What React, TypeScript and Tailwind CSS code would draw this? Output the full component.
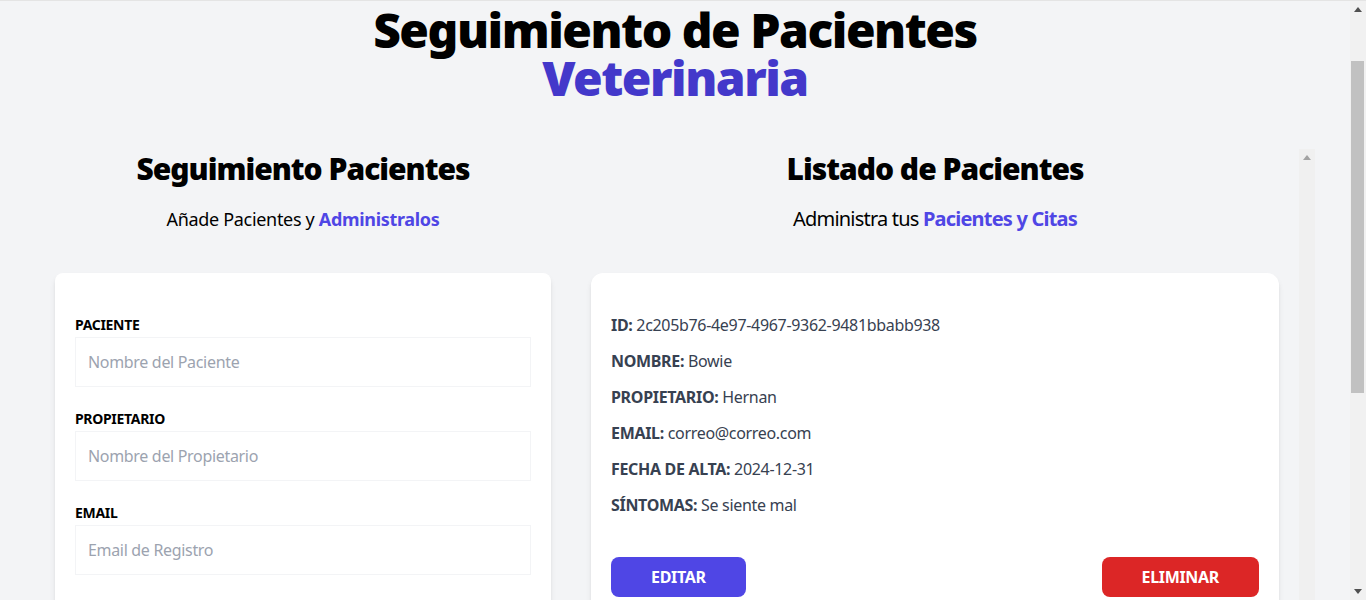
import React from "react";

function UpArrow({ color }: { color: string }) {
  return (
    <svg width="8" height="5" viewBox="0 0 8 5">
      <path d="M0 5 L4 0 L8 5 Z" fill={color} />
    </svg>
  );
}

function DownArrow({ color }: { color: string }) {
  return (
    <svg width="8" height="5" viewBox="0 0 8 5">
      <path d="M0 0 L8 0 L4 5 Z" fill={color} />
    </svg>
  );
}

function Field({ label, placeholder }: { label: string; placeholder: string }) {
  return (
    <div className="mb-5">
      <label className="block text-sm leading-6 font-bold uppercase text-black">{label}</label>
      <input
        className="block w-full p-3 text-base leading-6 border border-[#f3f4f6] bg-white placeholder:text-[#9ca3af] outline-none tracking-[-0.02em]"
        placeholder={placeholder}
      />
    </div>
  );
}

function Row({ label, value }: { label: string; value: string }) {
  return (
    <p className="mb-3 text-base leading-6 font-bold uppercase text-[#374151]">
      {label} <span className="font-normal normal-case">{value}</span>
    </p>
  );
}

export default function App() {
  return (
    <div className="w-[1366px] h-[600px] overflow-hidden flex bg-[#f3f4f6] border-t border-[#e4e4e4] font-['Noto_Sans',sans-serif] text-black tracking-[-0.02em]">
      <div className="w-[1350px] flex-none">
        <div className="w-[1280px] mx-auto pt-[5px]">
          <h1 className="text-5xl leading-none font-black text-center tracking-[-1.5px]">
            <span className="block">Seguimiento de Pacientes</span>
            <span className="block text-[#4338ca]">Veterinaria</span>
          </h1>

          <div className="mt-[47px] flex items-start">
            {/* Left column */}
            <div className="w-[496px] mx-5 flex-none">
              <h2 className="mt-[2px] text-3xl leading-9 font-black text-center tracking-[-1px]">Seguimiento Pacientes</h2>
              <p className="text-lg leading-7 mt-[18px] mb-10 text-center">
                Añade Pacientes y <span className="text-[#4f46e5] font-bold">Administralos</span>
              </p>
              <form className="bg-white shadow-md rounded-lg py-10 px-5 mb-10">
                <Field label="Paciente" placeholder="Nombre del Paciente" />
                <Field label="Propietario" placeholder="Nombre del Propietario" />
                <Field label="Email" placeholder="Email de Registro" />
                <Field label="Alta" placeholder="" />
              </form>
            </div>

            {/* Right column */}
            <div className="w-[744px] flex-none flex h-[700px]">
              <div className="w-[728px] flex-none">
                <h2 className="mt-[2px] text-3xl leading-9 font-black text-center tracking-[-1px]">Listado de Pacientes</h2>
                <p className="text-xl leading-7 mt-[18px] mb-10 text-center tracking-[-0.04em]">
                  Administra tus <span className="text-[#4f46e5] font-bold">Pacientes y Citas</span>
                </p>
                <div className="mx-5 bg-white shadow-md px-5 py-10 rounded-xl">
                  <Row label="ID:" value="2c205b76-4e97-4967-9362-9481bbabb938" />
                  <Row label="Nombre:" value="Bowie" />
                  <Row label="Propietario:" value="Hernan" />
                  <Row label="Email:" value="correo@correo.com" />
                  <Row label="Fecha de alta:" value="2024-12-31" />
                  <Row label="Síntomas:" value="Se siente mal" />
                  <div className="flex justify-between mt-10">
                    <button className="py-2 px-10 bg-[#4f46e5] text-white font-bold uppercase rounded-lg leading-6">
                      Editar
                    </button>
                    <button className="py-2 px-10 bg-[#dc2626] text-white font-bold uppercase rounded-lg leading-6">
                      Eliminar
                    </button>
                  </div>
                </div>
              </div>
              <div className="w-4 flex-none bg-[#f0f0f0] flex flex-col items-center">
                <div className="h-[17px] flex items-center justify-center">
                  <UpArrow color="#a3a3a3" />
                </div>
              </div>
            </div>
          </div>
        </div>
      </div>

      {/* Page scrollbar */}
      <div className="w-4 flex-none bg-[#f1f1f1] flex flex-col">
        <div className="h-[17px] flex items-center justify-center">
          <UpArrow color="#505050" />
        </div>
        <div className="h-[43px]" />
        <div className="h-[332px] ml-px w-[13px] bg-[#c1c1c1]" />
        <div className="flex-1" />
        <div className="h-[17px] flex items-center justify-center">
          <DownArrow color="#505050" />
        </div>
      </div>
    </div>
  );
}
